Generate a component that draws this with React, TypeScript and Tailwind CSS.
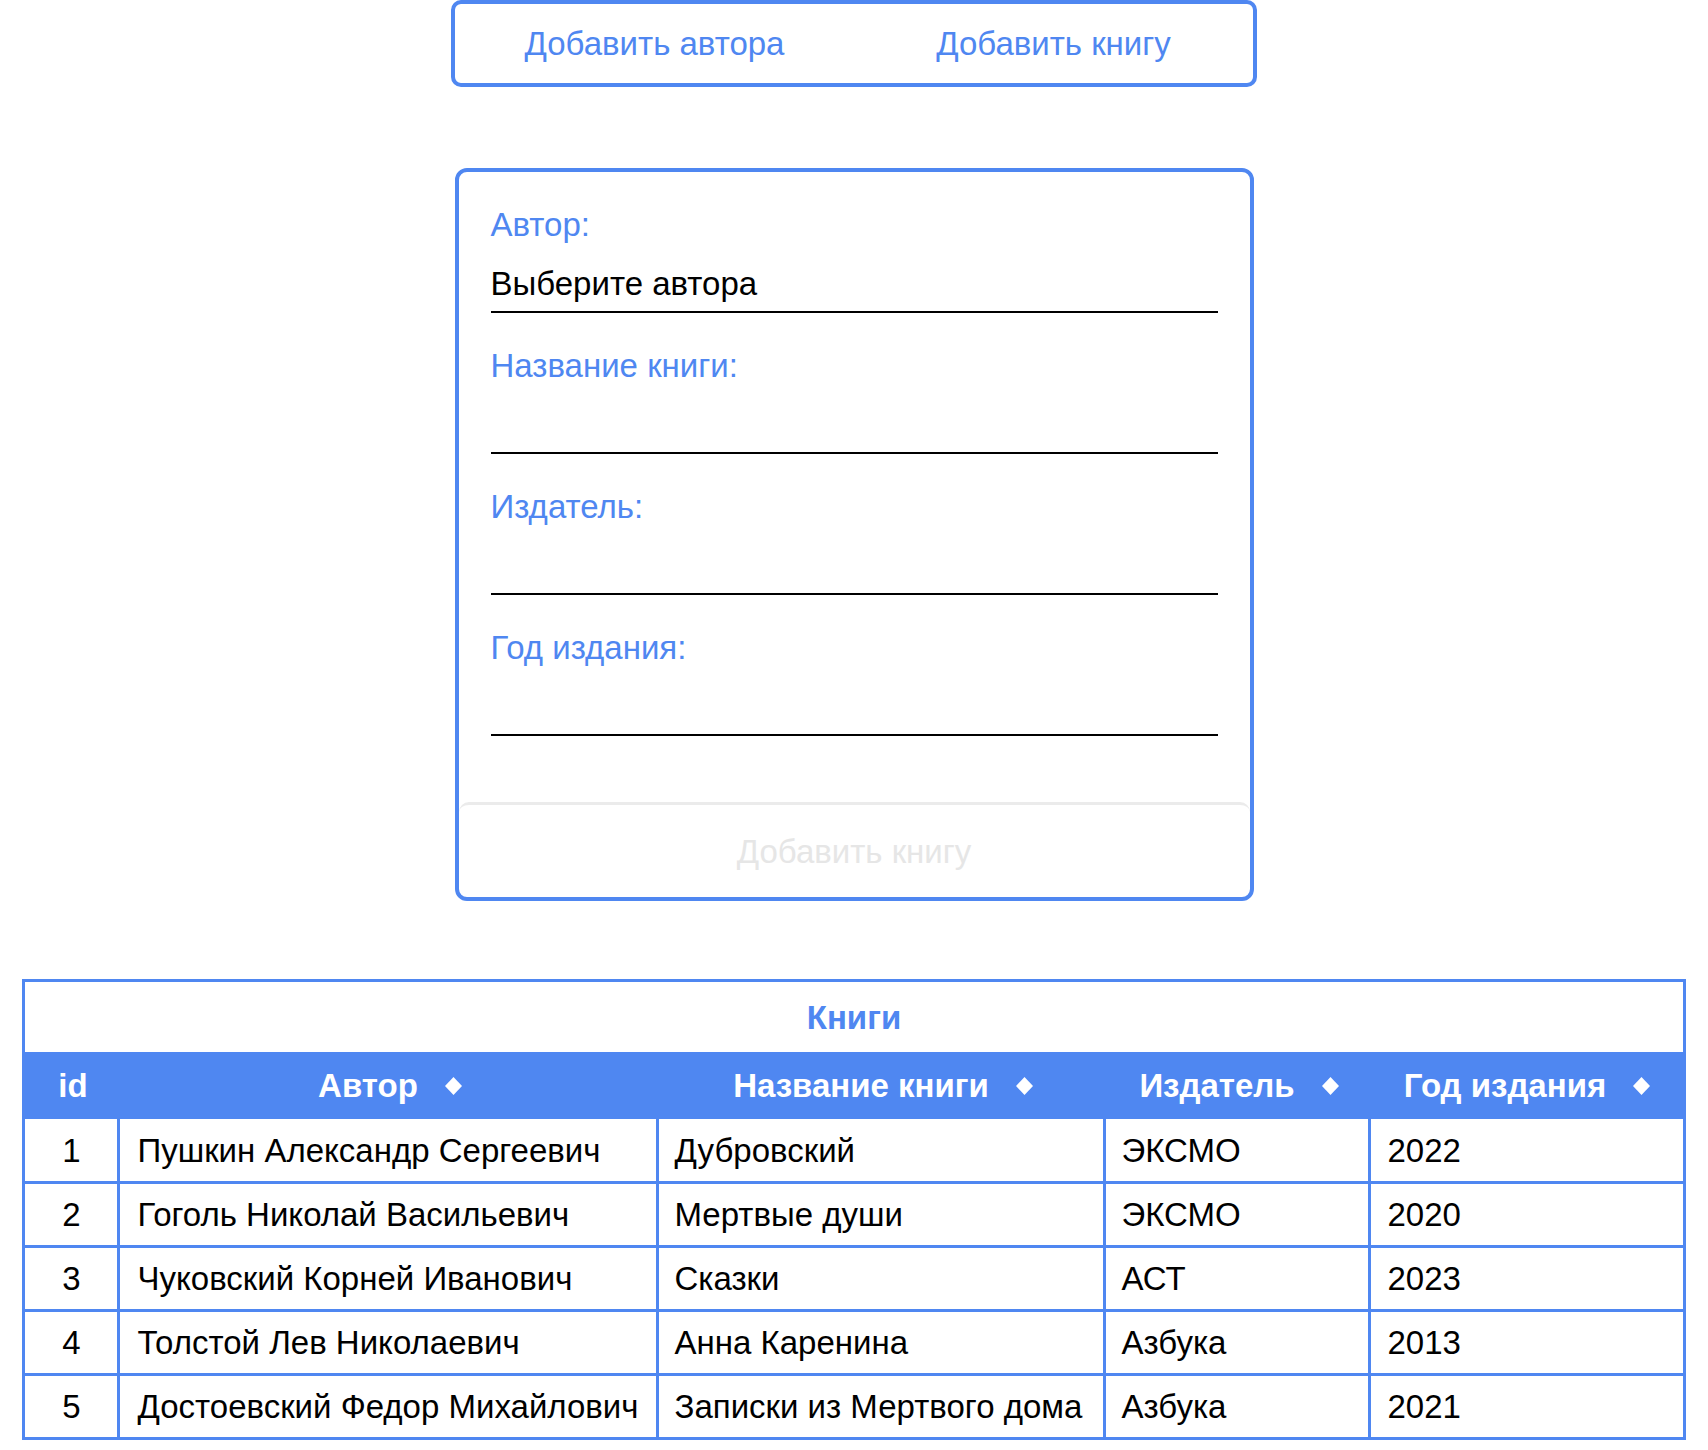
const BLUE = 'border-[#4f87f1]';

interface Book {
  id: number;
  author: string;
  title: string;
  publisher: string;
  year: number;
}

const books: Book[] = [
  { id: 1, author: 'Пушкин Александр Сергеевич', title: 'Дубровский', publisher: 'ЭКСМО', year: 2022 },
  { id: 2, author: 'Гоголь Николай Васильевич', title: 'Мертвые души', publisher: 'ЭКСМО', year: 2020 },
  { id: 3, author: 'Чуковский Корней Иванович', title: 'Сказки', publisher: 'АСТ', year: 2023 },
  { id: 4, author: 'Толстой Лев Николаевич', title: 'Анна Каренина', publisher: 'Азбука', year: 2013 },
  { id: 5, author: 'Достоевский Федор Михайлович', title: 'Записки из Мертвого дома', publisher: 'Азбука', year: 2021 },
];

const fields = [
  { label: 'Автор:', value: 'Выберите автора' },
  { label: 'Название книги:', value: '' },
  { label: 'Издатель:', value: '' },
  { label: 'Год издания:', value: '' },
];

function SortIcon() {
  return (
    <svg width="17" height="18" viewBox="0 0 17 18" className="ml-[27px] inline-block">
      <polygon points="8.5,0 17,9 8.5,18 0,9" fill="white" />
    </svg>
  );
}

function HeaderCell({ label, sortable = true }: { label: string; sortable?: boolean }) {
  return (
    <th className="h-[67px] bg-[#4f87f1] p-0 text-center font-bold text-white">
      <span className="inline-flex items-center">
        {label}
        {sortable && <SortIcon />}
      </span>
    </th>
  );
}

export default function App() {
  return (
    <div
      className="min-h-[1450px] bg-white text-[33px] leading-[37px] text-black"
      style={{ fontFamily: '"Liberation Sans", Arial, sans-serif' }}
    >
      {/* Nav */}
      <nav className={`mx-auto flex h-[87px] w-[806px] rounded-[10px] border-4 ${BLUE}`}>
        <button className="flex-1 text-[#4f87f1]">Добавить автора</button>
        <button className="flex-1 text-[#4f87f1]">Добавить книгу</button>
      </nav>

      {/* Form */}
      <form
        className={`mx-auto mt-[81px] flex w-[799px] flex-col overflow-hidden rounded-[12px] border-4 pt-[34px] ${BLUE}`}
      >
        <div className="flex flex-col gap-[34px] px-[32px]">
          {fields.map((field) => (
            <div key={field.label} className="flex flex-col">
              <label className="text-[#4f87f1]">{field.label}</label>
              <div className="mt-[8px] flex h-[62px] items-center border-b-2 border-black pt-[4px]">
                {field.value}
              </div>
            </div>
          ))}
        </div>
        <button
          type="button"
          disabled
          className="mt-[66px] h-[95px] rounded-t-[10px] border-t-[3px] border-[#ebebeb] text-[#e6e6e6]"
        >
          Добавить книгу
        </button>
      </form>

      {/* Table */}
      <table
        className={`mx-auto mt-[78px] w-[1663px] table-fixed border-separate border-spacing-0 border-[3px] ${BLUE}`}
      >
        <colgroup>
          <col className="w-[95px]" />
          <col className="w-[539px]" />
          <col className="w-[447px]" />
          <col className="w-[265px]" />
          <col className="w-[311px]" />
        </colgroup>
        <thead>
          <tr>
            <th colSpan={5} className="h-[70px] p-0 text-center font-bold text-[#4f87f1]">
              Книги
            </th>
          </tr>
          <tr>
            <HeaderCell label="id" sortable={false} />
            <HeaderCell label="Автор" />
            <HeaderCell label="Название книги" />
            <HeaderCell label="Издатель" />
            <HeaderCell label="Год издания" />
          </tr>
        </thead>
        <tbody>
          {books.map((book, index) => {
            const cell = index === 0 ? `h-[62px] ${BLUE}` : `h-[64px] border-t-[3px] ${BLUE}`;
            return (
              <tr key={book.id}>
                <td className={`${cell} border-r-[3px] p-0 text-center`}>{book.id}</td>
                <td className={`${cell} border-r-[3px] py-0 pl-[17px] whitespace-nowrap`}>{book.author}</td>
                <td className={`${cell} border-r-[3px] py-0 pl-[15px] whitespace-nowrap`}>{book.title}</td>
                <td className={`${cell} border-r-[3px] py-0 pl-[15px]`}>{book.publisher}</td>
                <td className={`${cell} py-0 pl-[16px]`}>{book.year}</td>
              </tr>
            );
          })}
        </tbody>
      </table>
    </div>
  );
}
